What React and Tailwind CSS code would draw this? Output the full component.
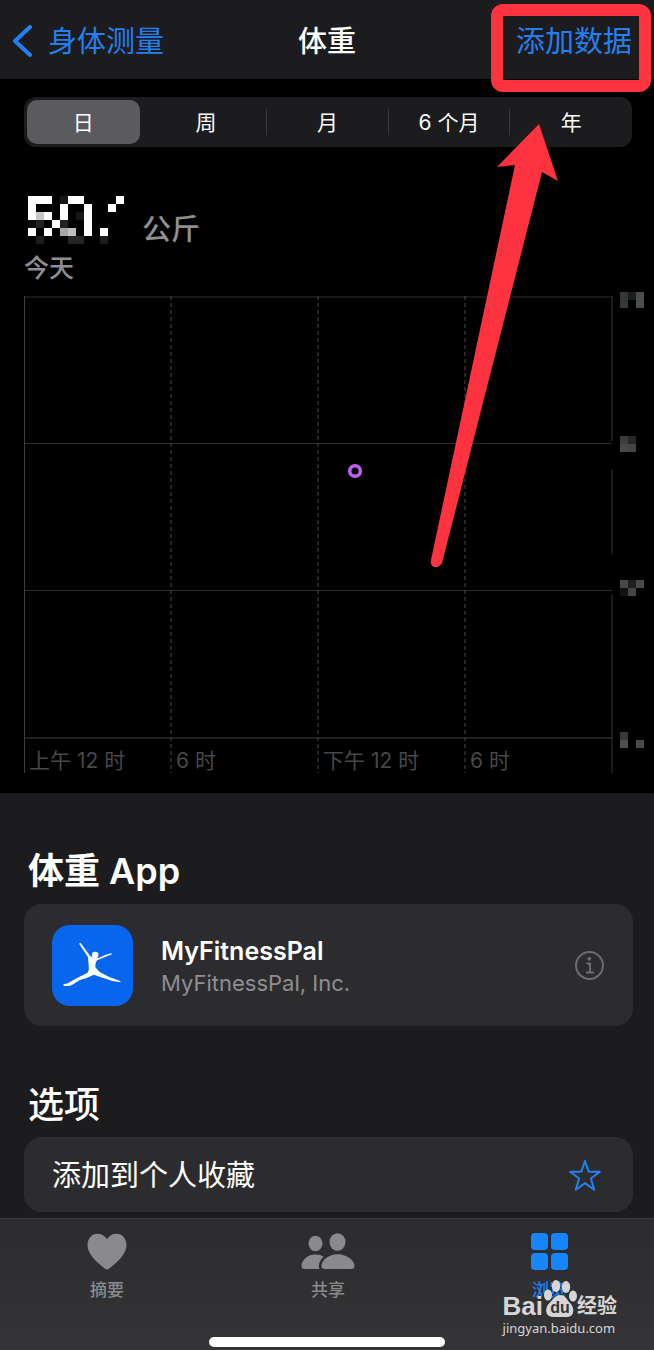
import React, { useState } from 'react';
import { clsx } from 'clsx';

const ranges = ['日', '周', '月', '6 个月', '年'];
const hours = ['上午 12 时', '6 时', '下午 12 时', '6 时'];

// [column, row, colour], in 8px cells
const valueCells = [
  [0, 0, '#fff'], [1, 0, '#fff'], [2, 0, '#fff'], [4, 0, '#161616'], [5, 0, '#fff'], [6, 0, '#fff'], [11, 0, '#fff'],
  [0, 1, '#fff'], [4, 1, '#fff'], [7, 1, '#fff'], [10, 1, '#fff'],
  [0, 2, '#fff'], [1, 2, '#c8c6c8'], [2, 2, '#fff'], [4, 2, '#fff'], [6, 2, '#161616'], [7, 2, '#fff'],
  [0, 3, '#0e0e0e'], [1, 3, '#222'], [3, 3, '#fff'], [4, 3, '#222'], [7, 3, '#fff'],
  [0, 4, '#fff'], [2, 4, '#fff'], [4, 4, '#a8a5a8'], [5, 4, '#c0bdc0'], [7, 4, '#fff'], [9, 4, '#fff'],
  [1, 5, '#1c1c1c'], [5, 5, '#242424'], [6, 5, '#242424'], [9, 5, '#1c1c1c'],
];

const scaleCells = [
  [0, 0, '#353737'], [1, 0, '#1a1f1d'], [2, 0, '#4b4c4e'], [0, 1, '#353737'], [2, 1, '#4b4c4e'],
  [0, 18, '#3c3c3d'], [1, 18, '#272728'], [0, 19, '#48484a'], [1, 19, '#444446'],
  [0, 36, '#48474b'], [1, 36, '#1e1e1e'], [2, 36, '#48474b'], [0, 37, '#121212'], [1, 37, '#454447'],
  [0, 55, '#373738'], [0, 56, '#4d4c50'], [2, 56, '#48474b'],
];

const Mosaic = ({ cells, className }) => (
  <svg className={className} shapeRendering="crispEdges" aria-hidden="true">
    {cells.map(([x, y, fill]) => (
      <rect key={`${x}-${y}`} x={x * 8} y={y * 8} width="8" height="8" fill={fill} />
    ))}
  </svg>
);

const HeartIcon = () => (
  <svg width="40" height="37" viewBox="0 0 40 37" fill="currentColor">
    <path d="M20 36.5c-.8 0-1.500-.5-2.300-1.100C8.500 28.500.5 20.500.5 12.300.5 5.600 4.700.8 10.600.8c4 0 7.300 2 9.400 5.500C22.100 2.800 25.400.8 29.400.8c5.900 0 10.100 4.800 10.100 11.500 0 8.200-8 16.200-17.200 23.100-.8.6-1.500 1.100-2.300 1.100z" />
  </svg>
);

const PeopleIcon = () => (
  <svg width="54" height="37" viewBox="0 0 54 37" fill="currentColor">
    <ellipse cx="14.500" cy="10.500" rx="7" ry="7.700" />
    <ellipse cx="36.500" cy="9" rx="8" ry="8.800" />
    <path d="M18.500 36H3.500C1.500 36 .5 35 .5 33c0-5 5.200-11.500 14-11.500 3.400 0 6 .9 8.200 2.200-3.500 2.800-6 7.800-4.200 12.300z" />
    <path d="M24 36c-2.300 0-3.500-1-3.500-3 0-5 6-11.800 16-11.800s17 6.800 17 11.800c0 2-1.200 3-3.500 3z" />
  </svg>
);

const BrowseIcon = () => (
  <svg width="37" height="37" viewBox="0 0 37 37" fill="currentColor">
    <rect x="0" y="0" width="17" height="17" rx="4" />
    <rect x="20" y="0" width="17" height="17" rx="4" />
    <rect x="0" y="20" width="17" height="17" rx="4" />
    <rect x="20" y="20" width="17" height="17" rx="4" />
  </svg>
);

const FitnessLogo = () => (
  <svg className="size-[81px] shrink-0" viewBox="0 0 246 246">
    <rect width="246" height="246" rx="54" fill="#0866ee" />
    <circle cx="131" cy="91" r="10" fill="#fff" />
    <path
      fill="#fff"
      d="M82 56l5-1 29 39 12 7 14-1 19-9 19-5 2 3-21 8-24 10c-5 8-6 14-5 22l13 14 27 14 35 13 1 4-24-4-35-11-22-8-22 10-20 6-22 14-10 4H36l-2-4 16-5 20-12 38-19 4-10-1-17-2-21z"
    />
  </svg>
);

const tabs = [
  { label: '摘要', icon: <HeartIcon /> },
  { label: '共享', icon: <PeopleIcon /> },
  { label: '浏览', icon: <BrowseIcon />, active: true },
];

const Header = () => (
  <header className="relative grid grid-cols-3 items-center h-[79px] pt-1 px-[22px] bg-[#1c1c1e] text-[29px]">
    <button className="flex items-center gap-4 -ml-[10px] whitespace-nowrap text-[#2280f2]">
      <svg width="20" height="34" viewBox="0 0 20 34" fill="none" stroke="currentColor" strokeWidth="4" strokeLinecap="round" strokeLinejoin="round">
        <path d="M18 2L3 16l15 14" />
      </svg>
      <span className="leading-10">身体测量</span>
    </button>
    <h1 className="text-center leading-10 font-medium">体重</h1>
    <button className="justify-self-end leading-10 whitespace-nowrap text-[#2280f2]">添加数据</button>
    <div className="absolute top-1 right-[3px] w-40 h-[88px] rounded-xl border-12 border-[#ff3340] pointer-events-none" />
  </header>
);

const RangePicker = () => {
  const [range, setRange] = useState('日');

  return (
    <div className="flex h-[50px] py-[3px] ml-6 mr-[22px] rounded-xl bg-[#1c1c1f]">
      {ranges.map((item, i) => (
        <div key={item} className="flex flex-1 items-center">
          <button
            onClick={() => setRange(item)}
            className={clsx('flex-1 h-full pt-0.5 text-[21px] leading-8', range === item && 'ml-[3px] mr-[6px] rounded-[10px] bg-[#5b5a5f]')}
          >
            {item}
          </button>
          {i > 0 && i < ranges.length - 1 && <span className="w-px h-[26px] bg-[#3a3a3d]" />}
        </div>
      ))}
    </div>
  );
};

const WeightChart = () => (
  <div className="flex pl-6 pr-[10px] mt-3">
    <div className="relative flex-1 h-[477px] pt-[449px]">
      <svg className="absolute inset-0 size-full overflow-visible" strokeWidth="1" stroke="#2c2c2e">
        <line x1="0" x2="100%" y1="1" y2="1" />
        <line x1="0" x2="100%" y1="147.500" y2="147.500" />
        <line x1="0" x2="100%" y1="294.500" y2="294.500" />
        <line x1="0" x2="100%" y1="442" y2="442" stroke="#3e3e40" />
        <line x1="0.5" x2="0.5" y1="0" y2="477" stroke="#3e3e40" />
        <line x1="25%" x2="25%" y1="0" y2="477" stroke="#48484a" strokeDasharray="4 3" />
        <line x1="50%" x2="50%" y1="0" y2="477" stroke="#48484a" strokeDasharray="4 3" />
        <line x1="75%" x2="75%" y1="0" y2="477" stroke="#48484a" strokeDasharray="4 3" />
        <line x1="100%" x2="100%" y1="0" y2="477" stroke="#343436" strokeDasharray="145 28 85 40 179" />
        <circle cx="56.300%" cy="175" r="5.300" fill="none" stroke="#bf5fee" strokeWidth="3.600" />
      </svg>
      <div className="relative grid grid-cols-4 text-[21px] leading-8 text-[#48484a]">
        {hours.map((hour, i) => (
          <span key={i} className="pl-[5px] whitespace-nowrap">{hour}</span>
        ))}
      </div>
    </div>
    <Mosaic cells={scaleCells} className="w-6 h-[456px] ml-2 -mt-1" />
  </div>
);

const Pointer = () => (
  <svg className="absolute top-[120px] right-[90px] pointer-events-none" width="134" height="450" viewBox="0 0 134 450">
    <path fill="#ff3340" d="M109 4L128 61 112 52 12 443Q9 448 4 447 0 445 1 440L85 45 67 47z" />
  </svg>
);

const Watermark = () => (
  <div className="absolute right-[37px] bottom-3 text-[#d6d6d6] pointer-events-none">
    <div className="flex items-end h-[38px] font-bold">
      <span className="font-['Liberation_Sans'] text-[26px] leading-6">Bai</span>
      <svg width="34" height="38" viewBox="0 0 34 38" fill="currentColor">
        <ellipse cx="5" cy="15" rx="4" ry="5.500" />
        <ellipse cx="13" cy="6" rx="4.200" ry="6" />
        <ellipse cx="23" cy="7" rx="4.200" ry="6" />
        <ellipse cx="30" cy="16" rx="4" ry="5.500" />
        <path d="M17.500 15c5 0 6.500 5 10 8.500 4 4 4.500 13-3 13.500H10C2 37 1.500 28 6 23.500c4-4 6-8.500 11.500-8.500z" />
        <text x="17" y="33" textAnchor="middle" fontSize="16" fontFamily="Liberation Sans" fill="#333335">du</text>
      </svg>
      <span className="text-[20px] leading-6">经验</span>
    </div>
    <p className="font-['Noto_Sans'] text-[13px] leading-5">jingyan.baidu.com</p>
  </div>
);

export default function App() {
  return (
    <div className="relative overflow-hidden bg-black text-white font-['Inter','Noto_Sans_CJK_SC',sans-serif]">
      <Header />

      <main>
        <section className="pt-[18px] pb-5">
          <RangePicker />
          <div className="flex items-end h-12 mt-[49px] pl-7 gap-[18px]">
            <Mosaic cells={valueCells} className="w-24 h-12" />
            <span className="text-[29px] leading-7 font-medium text-[#8e8e93]">公斤</span>
          </div>
          <p className="mt-2 pl-6 text-[25px] leading-8 font-medium text-[#8e8e93]">今天</p>
          <WeightChart />
        </section>

        <section className="pt-[54px] pb-[6px] pl-6 pr-[21px] bg-[#1c1c1e]">
          <h2 className="pl-1 mb-[9px] text-[36px] leading-12 font-semibold">体重 App</h2>
          <div className="flex items-center h-[122px] px-7 rounded-[18px] bg-[#2c2c2e]">
            <FitnessLogo />
            <div className="flex-1 pt-1 ml-7">
              <h3 className="text-[25px] leading-8 font-semibold">MyFitnessPal</h3>
              <p className="text-[22px] leading-8 text-[#8e8e93]">MyFitnessPal, Inc.</p>
            </div>
            <button aria-label="MyFitnessPal" className="text-[#6c6c70]">
              <svg width="31" height="31" viewBox="0 0 31 31" fill="none" stroke="currentColor" strokeWidth="2">
                <circle cx="15.500" cy="15.500" r="13.500" />
                <circle cx="15.300" cy="8.800" r="1.900" fill="currentColor" stroke="none" />
                <path d="M12.500 13.500h3.500v9M12 22.500h8" />
              </svg>
            </button>
          </div>

          <h2 className="pl-1 mt-[55px] mb-2 text-[36px] leading-12 font-medium">选项</h2>
          <button className="flex items-center justify-between w-full h-[75px] pt-0.5 px-7 rounded-[18px] bg-[#2c2c2e] text-[29px] leading-10">
            添加到个人收藏
            <svg className="text-[#2280f2] mr-1" width="32" height="32" viewBox="0 0 32 32" fill="none" stroke="currentColor" strokeWidth="2" strokeLinejoin="round">
              <path d="M16 1l3.700 10.700h11.100l-8.900 6.800 3.300 11.300L16 23.100l-9.200 6.700L10.100 18.500 1.200 11.700h11.100z" />
            </svg>
          </button>
        </section>
      </main>

      <nav className="pt-[14px] pb-[3px] border-t border-[#3a3a3c] bg-linear-to-b from-[#2c2c2e] to-[#343436]">
        <div className="flex justify-between pl-[67px] pr-[65px]">
          {tabs.map((tab) => (
            <button
              key={tab.label}
              className={clsx('flex flex-col items-center w-20 gap-2', tab.active ? 'text-[#1685ff]' : 'text-[#8a8a8c]')}
            >
              {tab.icon}
              <span className="text-[17px] leading-6 font-medium">{tab.label}</span>
            </button>
          ))}
        </div>
        <div className="w-[236px] h-[10px] mx-auto mt-[35px] rounded-full bg-white" />
      </nav>

      <Pointer />
      <Watermark />
    </div>
  );
}
